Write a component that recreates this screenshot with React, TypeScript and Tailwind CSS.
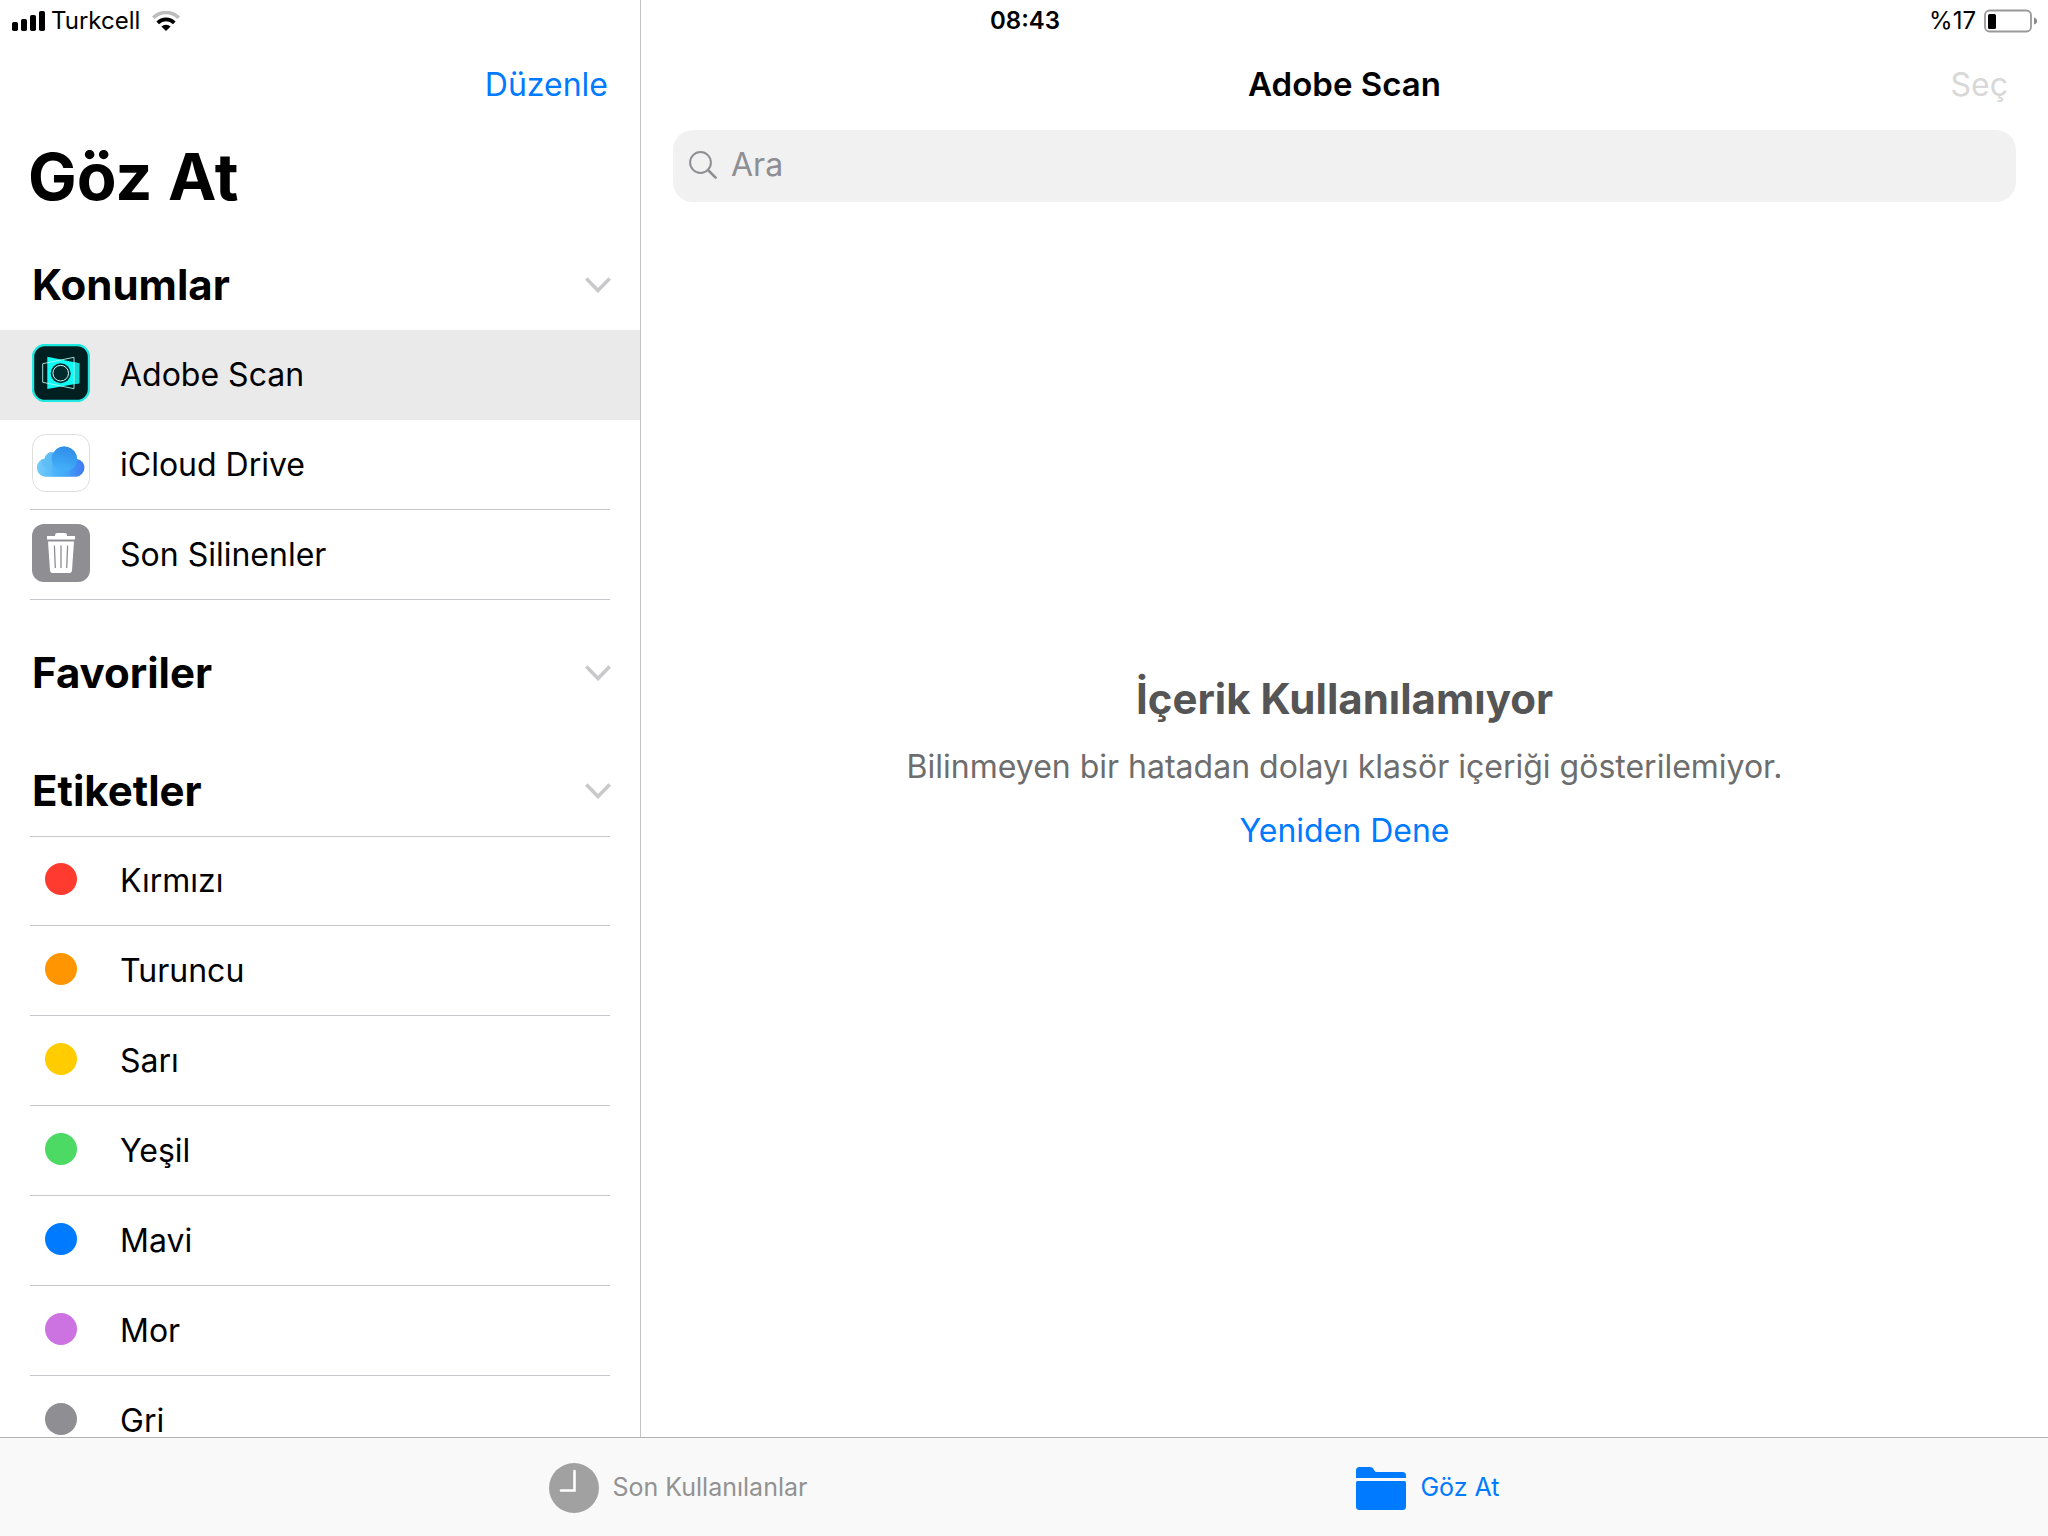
import { useState, type ReactNode } from "react";

interface Location {
  name: string;
  icon: ReactNode;
}

const locations: Location[] = [
  { name: "Adobe Scan", icon: <AdobeScanIcon /> },
  { name: "iCloud Drive", icon: <ICloudIcon /> },
  { name: "Son Silinenler", icon: <TrashIcon /> },
];

const tags = [
  { name: "Kırmızı", color: "bg-[#ff3b30]" },
  { name: "Turuncu", color: "bg-[#ff9500]" },
  { name: "Sarı", color: "bg-[#ffcc00]" },
  { name: "Yeşil", color: "bg-[#4cd964]" },
  { name: "Mavi", color: "bg-[#007aff]" },
  { name: "Mor", color: "bg-[#cc73e1]" },
  { name: "Gri", color: "bg-[#8e8e93]" },
];

function AdobeScanIcon() {
  return (
    <svg className="h-[58px] w-[58px]" viewBox="0 0 58 58" aria-hidden="true">
      <rect x="1" y="1" width="56" height="56" rx="12" fill="#001f20" stroke="#1ee8e0" strokeWidth="2.4" />
      <path d="m15.3 12.7 32 6.6v20l-32 5.7z" fill="#0ffcf4" />
      <path d="M42.500 18.300l4.800 1v20l-4.800.9z" fill="#10d8d2" />
      <path d="M10.7 19.700 42 13.300v31.400l-31.300-6.400z" fill="none" stroke="#a8f5f1" strokeWidth="0.9" />
      <circle cx="28.7" cy="29.2" r="10" fill="#002a2b" />
      <circle cx="28.7" cy="29.2" r="7.8" fill="none" stroke="#c8fffc" strokeWidth="1" />
    </svg>
  );
}

function ICloudIcon() {
  return (
    <svg className="h-[58px] w-[58px]" viewBox="0 0 58 58" aria-hidden="true">
      <defs>
        <linearGradient id="cloud-base" x1="0" x2="1" y1="0" y2="0">
          <stop offset="0" stopColor="#77cdf8" />
          <stop offset="0.5" stopColor="#45aefa" />
          <stop offset="1" stopColor="#3f74f3" />
        </linearGradient>
        <linearGradient id="cloud-top" x1="0.6" x2="0.3" y1="0" y2="1">
          <stop offset="0" stopColor="#2f8ce8" />
          <stop offset="1" stopColor="#44b2fb" />
        </linearGradient>
        <clipPath id="cloud-shape">
          <path d="M14 42.7a9 9 0 0 1-1.500-17.900A7.4 7.4 0 0 1 21.500 18.500a12.7 12.7 0 0 1 23.500 6.400 9 9 0 0 1-.5 17.800z" />
        </clipPath>
      </defs>
      <rect x="0.5" y="0.5" width="57" height="57" rx="13" fill="#fff" stroke="#dedede" />
      <g clipPath="url(#cloud-shape)">
        <rect x="4" y="10" width="50" height="34" fill="url(#cloud-base)" />
        <circle cx="17" cy="25.6" r="8" fill="#5dbcf2" opacity="0.6" />
        <circle cx="32.4" cy="24.8" r="12.8" fill="url(#cloud-top)" />
        <path d="M20 44V30h18v14z" fill="#44b0fa" opacity="0.35" />
      </g>
    </svg>
  );
}

function TrashIcon() {
  return (
    <svg className="h-[58px] w-[58px]" viewBox="0 0 58 58" aria-hidden="true">
      <rect width="58" height="58" rx="12" fill="#8e8e93" />
      <path d="M15 12h8v-.8Q23 9 25.2 9h7.6Q35 9 35 11.2v.8h8v3.4H15z" fill="#fff" />
      <path d="M16 17.4h26l-2 28.8Q39.8 49 37 49H21q-2.8 0-3-2.8z" fill="#fff" />
      <path d="m22.4 21.5.9 22.5M29 21.5V44M35.6 21.5 34.7 44" stroke="#8e8e93" strokeWidth="1.3" fill="none" />
    </svg>
  );
}

function StatusBar() {
  return (
    <header className="col-start-1 row-start-1 grid h-10 grid-cols-3 items-center self-start pt-px pr-[10px] pl-3 text-2xl leading-none">
      <div className="flex items-center">
        <svg className="h-5 w-[33px]" viewBox="0 0 33 20" aria-hidden="true">
          <rect x="0" y="11" width="6" height="9" rx="1.8" />
          <rect x="9" y="8" width="6" height="12" rx="1.8" />
          <rect x="18" y="4" width="6" height="16" rx="1.8" />
          <rect x="27" y="0" width="6" height="20" rx="1.8" />
        </svg>
        <span className="ml-1.5">Turkcell</span>
        <svg className="ml-3 h-5 w-7" viewBox="0 0 28 20" fill="none" aria-hidden="true">
          <path d="M1.3 6.8a18 18 0 0 1 25.4 0" stroke="#bdbdbd" strokeWidth="3.6" />
          <path d="M5.700 11.800a12 12 0 0 1 16.600 0" stroke="#000" strokeWidth="3.8" />
          <path d="M14 20 9.400 15.600a6.600 6.600 0 0 1 9.200 0z" fill="#000" />
        </svg>
      </div>
      <time className="text-center font-semibold">08:43</time>
      <div className="flex items-center justify-end gap-2">
        <span>%17</span>
        <svg className="h-6 w-[54px]" viewBox="0 0 54 24" aria-hidden="true">
          <rect x="1" y="1.5" width="46" height="21" rx="4.5" fill="none" stroke="#999" strokeWidth="1.8" />
          <rect x="4" y="5" width="8" height="15" rx="1.5" />
          <path d="M50 8.5q3 1 3 3.5t-3 3.500z" fill="#888" />
        </svg>
      </div>
    </header>
  );
}

interface SectionProps {
  title: string;
  children?: ReactNode;
}

function Section({ title, children }: SectionProps) {
  const [open, setOpen] = useState(true);

  return (
    <section>
      <h2>
        <button
          type="button"
          aria-expanded={open}
          onClick={() => setOpen(!open)}
          className="flex h-[92px] w-full items-center justify-between pt-0.5 pr-[29px] pl-8 text-[42px] leading-none font-bold"
        >
          {title}
          <svg className="h-4 w-[26px]" viewBox="0 0 26 16" fill="none" aria-hidden="true">
            <path d="m1.3 1.5 11.7 12 11.7-12" stroke="#c9c9cb" strokeWidth="3.6" />
          </svg>
        </button>
      </h2>
      {open && children}
    </section>
  );
}

function Sidebar() {
  const [selected, setSelected] = useState("Adobe Scan");

  return (
    <aside className="flex w-[641px] shrink-0 flex-col overflow-hidden border-r border-[#c4c4c6] pt-10">
      <div className="flex h-[88px] shrink-0 items-center justify-end pt-0.5 pr-8">
        <button type="button" className="text-[32px] text-[#007aff]">
          Düzenle
        </button>
      </div>
      <h1 className="flex h-24 shrink-0 items-center pl-7 text-[65px] leading-none font-bold">Göz At</h1>

      <nav className="mt-[14px] flex flex-col gap-[26px]" aria-label="Göz At">
        <Section title="Konumlar">
          <ul>
            {locations.map(({ name, icon }) => (
              <li key={name} className={name === selected ? "bg-[#eaeaea]" : ""}>
                <button type="button" onClick={() => setSelected(name)} className="w-full px-[30px] text-left">
                  <span
                    className={`flex h-[90px] items-center border-b pb-1 pl-0.5 text-[32px] leading-none ${
                      name === selected ? "border-transparent" : "border-[#c8c7cc]"
                    }`}
                  >
                    {icon}
                    <span className="pt-1 pl-[30px]">{name}</span>
                  </span>
                </button>
              </li>
            ))}
          </ul>
        </Section>

        <Section title="Favoriler" />

        <Section title="Etiketler">
          <ul className="mx-[30px] border-t border-[#c8c7cc]">
            {tags.map(({ name, color }) => (
              <li key={name} className="h-[90px] border-b border-[#c8c7cc] first:h-[89px]">
                <button type="button" className="flex h-full w-full items-center pb-1 pl-0.5 text-[32px] leading-none">
                  <span className="flex w-[58px] justify-center">
                    <span className={`h-8 w-8 rounded-full ${color}`} />
                  </span>
                  <span className="pt-1 pl-[30px]">{name}</span>
                </button>
              </li>
            ))}
          </ul>
        </Section>
      </nav>
    </aside>
  );
}

function Content() {
  return (
    <main className="flex min-w-0 flex-1 flex-col px-8 pt-10">
      <div className="grid h-[90px] shrink-0 grid-cols-[1fr_auto_1fr] items-center text-[32px]">
        <h2 className="col-start-2 text-[33px] font-semibold">Adobe Scan</h2>
        <button type="button" disabled className="justify-self-end pr-2 text-[#d8d8d8]">
          Seç
        </button>
      </div>

      <label className="flex h-[72px] shrink-0 items-center gap-[14px] rounded-[20px] bg-[#f1f1f2] pb-0.5 pl-4">
        <svg className="h-7 w-7 shrink-0" viewBox="0 0 28 28" fill="none" stroke="#8e8e93" aria-hidden="true">
          <circle cx="11.5" cy="11.5" r="10.4" strokeWidth="2" />
          <path d="m19 19 7.6 7.6" strokeWidth="2.6" strokeLinecap="round" />
        </svg>
        <input
          type="search"
          aria-label="Ara"
          placeholder="Ara"
          className="min-w-0 flex-1 bg-transparent text-[32px] outline-none placeholder:text-[#8e8e93]"
        />
      </label>

      <div className="flex flex-1 flex-col items-center justify-center pb-[106px] text-center">
        <h3 className="text-[42px] leading-[56px] font-bold text-[#555555]">İçerik Kullanılamıyor</h3>
        <p className="mt-2 text-[32px] leading-[64px] text-[#6d6d6d]">
          Bilinmeyen bir hatadan dolayı klasör içeriği gösterilemiyor.
        </p>
        <button type="button" className="text-[32px] leading-[64px] text-[#007aff]">
          Yeniden Dene
        </button>
      </div>
    </main>
  );
}

function TabBar() {
  return (
    <nav
      className="flex h-[99px] shrink-0 items-center justify-center gap-[549px] border-t border-[#b2b2b2] bg-[#f9f9f9] pt-0.5 text-[25px]"
      aria-label="Sekmeler"
    >
      <button type="button" className="flex items-center gap-[14px] text-[#929292]">
        <svg className="h-[50px] w-[50px]" viewBox="0 0 50 50" aria-hidden="true">
          <circle cx="25" cy="25" r="25" fill="#a1a1a1" />
          <path d="M25.5 8v19.5H12" fill="none" stroke="#fff" strokeWidth="2.6" strokeLinecap="round" />
        </svg>
        Son Kullanılanlar
      </button>
      <button type="button" aria-current="page" className="flex items-center gap-[14px] text-[#007aff]">
        <svg className="h-[43px] w-[50px]" viewBox="0 0 50 43" fill="currentColor" aria-hidden="true">
          <path d="M0 11V3.5Q0 0 3.5 0h11q2 0 3 2l1 1.8Q19.2 5 21 5h25.5Q50 5 50 8.5V11z" />
          <path d="M1.5 14h47q1.5 0 1.5 1.5v24q0 3.5-3.5 3.500h-43Q0 43 0 39.5v-24Q0 14 1.5 14z" />
        </svg>
        Göz At
      </button>
    </nav>
  );
}

export default function App() {
  return (
    <div className="flex h-screen flex-col overflow-hidden bg-white font-['Inter','Liberation_Sans',sans-serif] text-black">
      {/* The status bar shares a grid cell with the columns so the divider reaches the top */}
      <div className="grid min-h-0 flex-1 grid-cols-[minmax(0,1fr)] grid-rows-[minmax(0,1fr)]">
        <div className="col-start-1 row-start-1 flex min-h-0">
          <Sidebar />
          <Content />
        </div>
        <StatusBar />
      </div>
      <TabBar />
    </div>
  );
}
